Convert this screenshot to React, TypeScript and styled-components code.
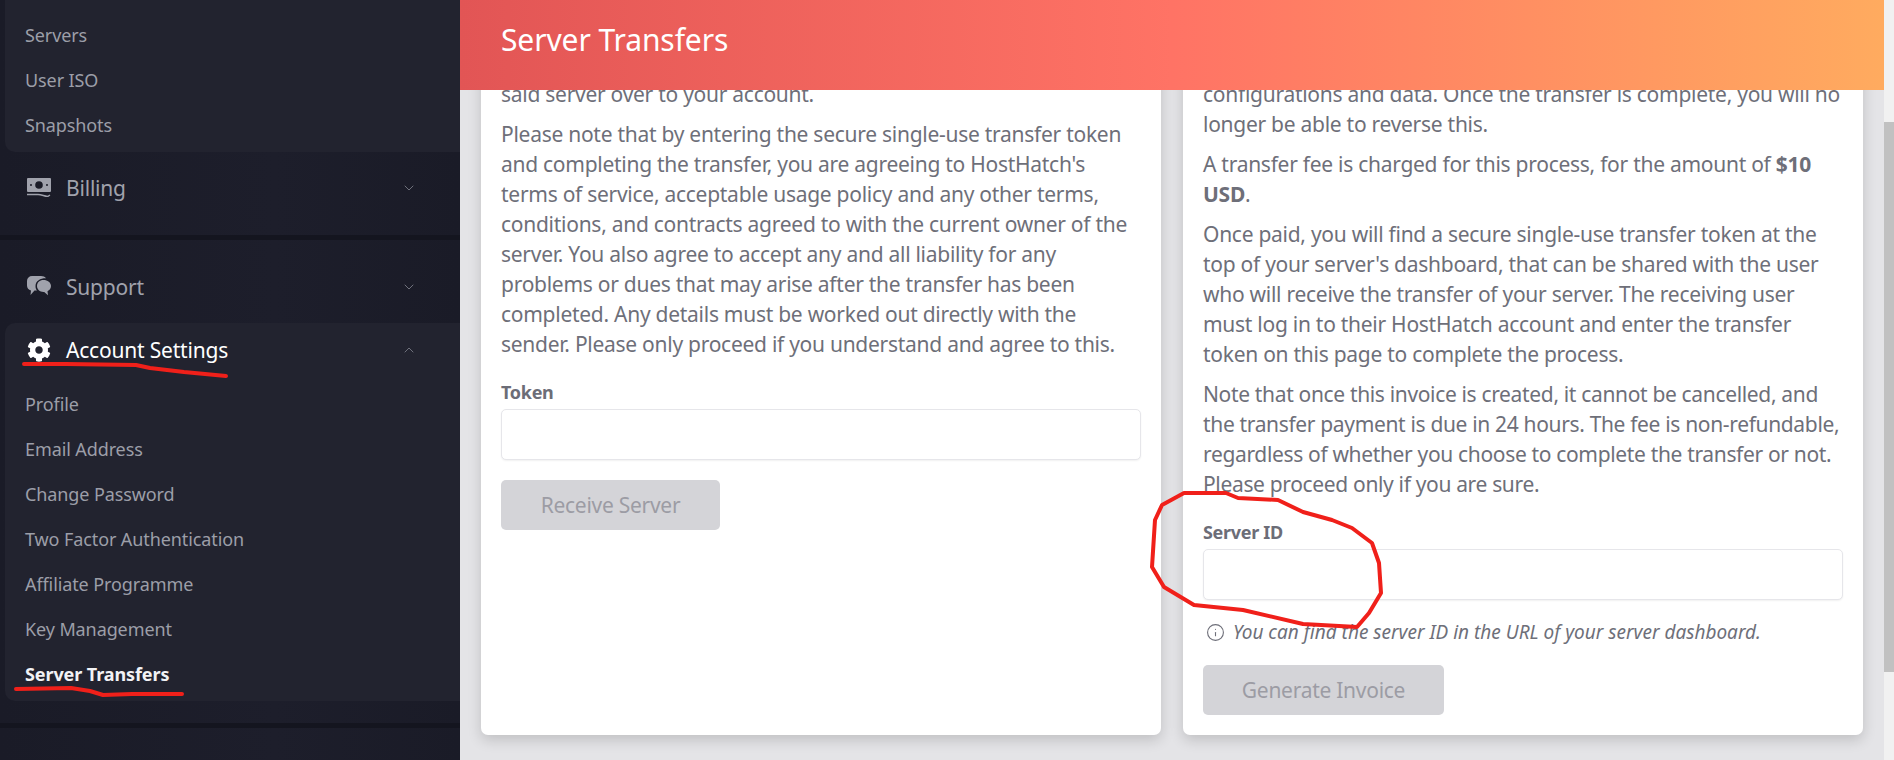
import { createGlobalStyle, styled } from "styled-components";
import { ChevronDown, ChevronUp, Info } from "lucide-react";
import { FaCog } from "react-icons/fa";

const GlobalStyle = createGlobalStyle`
  html, body {
    margin: 0;
    padding: 0;
    height: 760px;
    overflow: hidden;
    background: #e4e4e7;
    font-family: "Noto Sans", "Open Sans", sans-serif;
  }
  * {
    box-sizing: border-box;
  }
`;

const Shell = styled.div`
  position: relative;
  display: flex;
  width: 1894px;
  height: 760px;
  overflow: hidden;
`;

const Sidebar = styled.aside`
  flex: 0 0 460px;
  display: flex;
  flex-direction: column;
  background: linear-gradient(90deg, #1a1b27, #1d1e2b 60%, #1a1b27);
`;

const Panel = styled.div`
  margin-left: 5px;
  padding: 12px 0 5px;
  background: #22232f;
  border-radius: 0 0 0 10px;
`;

const OpenPanel = styled(Panel)`
  padding-top: 0;
  margin-bottom: 11px;
  border-radius: 10px 0 0 10px;
`;

const SubItem = styled.div<{ $active?: boolean }>`
  height: 45px;
  padding-left: 20px;
  display: flex;
  align-items: center;
  font-size: 18px;
  letter-spacing: -0.1px;
  font-weight: ${(props) => (props.$active ? 700 : 400)};
  color: ${(props) => (props.$active ? "#f2f2f5" : "#9c9ea8")};
`;

const MenuRow = styled.div<{ $open?: boolean }>`
  height: 72px;
  display: flex;
  align-items: center;
  padding-left: 27px;
  color: ${(props) => (props.$open ? "#ffffff" : "#a0a2ac")};
  font-size: 21px;
  letter-spacing: -0.2px;
`;

const OpenRow = styled(MenuRow)`
  height: 54px;
  margin-bottom: 4px;
  padding-left: 22px;
`;

const MenuIcon = styled.span`
  width: 24px;
  display: flex;
  justify-content: center;
  font-size: 24px;
  margin-right: 15px;
`;

const MenuLabel = styled.span`
  flex: 1;
`;

const Caret = styled.span`
  width: 59px;
  display: flex;
  color: #6f717c;
`;

const Divider = styled.div`
  height: 5px;
  margin: 11px 0;
  background: #14151f;
`;

const Main = styled.main`
  flex: 1;
  min-width: 0;
  display: flex;
  flex-direction: column;
`;

const Header = styled.header`
  flex: 0 0 90px;
  display: flex;
  align-items: center;
  padding: 0 0 12px 41px;
  color: #ffffff;
  font-size: 30px;
  letter-spacing: -0.1px;
  background: linear-gradient(90deg, #e25555 0%, #ff7365 50%, #ffab5f 100%);
`;

const Content = styled.div`
  flex: 1;
  min-height: 0;
  overflow: hidden;
  display: flex;
  flex-direction: column;
  justify-content: flex-end;
  padding: 0 21px 25px;
`;

const Cards = styled.div`
  display: grid;
  grid-template-columns: 680px 680px;
  column-gap: 22px;
`;

const Card = styled.section`
  padding: 20px;
  background: #ffffff;
  border-radius: 7px;
  box-shadow: 0 5px 14px rgba(0, 0, 0, 0.16);
`;

const Text = styled.p<{ $tight?: boolean }>`
  margin: 0 0 10px;
  font-size: 21px;
  line-height: 30px;
  letter-spacing: ${(props) => (props.$tight ? "-0.34px" : "-0.27px")};
  color: #6e6f79;

  b {
    font-weight: 700;
  }
`;

const Label = styled.label`
  display: block;
  margin-top: 20px;
  height: 27px;
  font-size: 18px;
  line-height: 27px;
  font-weight: 700;
  letter-spacing: -0.3px;
  color: #6c6d77;
`;

const Input = styled.input`
  display: block;
  width: 100%;
  height: 51px;
  margin-top: 3px;
  border: 1px solid #e6e6ea;
  border-radius: 5px;
  background: #ffffff;
  box-shadow: 0 1px 2px rgba(0, 0, 0, 0.06);
`;

const Hint = styled.div`
  display: flex;
  align-items: center;
  gap: 8px;
  height: 30px;
  margin-top: 17px;
  margin-left: 3px;
  font-size: 19px;
  font-style: italic;
  color: #6e6f79;
`;

const SubmitButton = styled.button<{ $width: number }>`
  display: block;
  width: ${(props) => props.$width}px;
  height: 50px;
  margin-top: 20px;
  border: 0;
  border-radius: 5px;
  background: #d4d4d8;
  color: #9c9ca4;
  font-family: inherit;
  font-size: 21px;
  letter-spacing: -0.27px;
`;

const HintButton = styled(SubmitButton)`
  margin-top: 18px;
`;

const Scrollbar = styled.div`
  flex: 0 0 10px;
  background: #f1f1f1;
  padding-top: 122px;
`;

const ScrollThumb = styled.div`
  height: 550px;
  background: #c1c1c1;
`;

const Scribbles = styled.svg`
  position: absolute;
  inset: 0;
  pointer-events: none;
`;

const InkPath = styled.path`
  fill: none;
  stroke: #f0201a;
  stroke-width: 4;
  stroke-linejoin: round;
  stroke-linecap: round;
`;

const serverLinks = ["Servers", "User ISO", "Snapshots"];
const accountLinks = [
  "Profile",
  "Email Address",
  "Change Password",
  "Two Factor Authentication",
  "Affiliate Programme",
  "Key Management",
];

const BillIcon = () => (
  <svg width="24" height="20" viewBox="0 0 24 20">
    <path
      fill="currentColor"
      fillRule="evenodd"
      d="M1 0h22a1 1 0 0 1 1 1v12a1 1 0 0 1-1 1H1a1 1 0 0 1-1-1V1a1 1 0 0 1 1-1zm11 3.2a3.8 3.8 0 1 0 0 7.6 3.8 3.8 0 0 0 0-7.6zM4 6a1 1 0 1 0 0 2 1 1 0 0 0 0-2zm16 0a1 1 0 1 0 0 2 1 1 0 0 0 0-2z"
    />
    <path
      fill="none"
      stroke="currentColor"
      strokeWidth="1.4"
      d="M0 16.5h11c4 0 7 2.2 10 1.8l2-1.3"
    />
  </svg>
);

const ChatIcon = () => (
  <svg width="24" height="22" viewBox="0 0 24 22">
    <path
      fill="currentColor"
      d="M5 0h9c2 0 4 .8 5 2.2C14 2 8.500 4.500 8.500 10c0 2 .6 3.500 1.500 4.500H7.500L3.500 19l.5-4.500C1.500 14 0 12 0 9.500V5a5 5 0 0 1 5-5z"
    />
    <path
      fill="currentColor"
      d="M16.500 4C20.600 4 24 6.600 24 10c0 2.400-1.600 4.300-3.500 5.200l.5 4-3.800-3.300c-4.200.3-7.200-2.400-7.200-5.900C10 6.600 12.500 4 16.500 4z"
    />
  </svg>
);

export default function App() {
  return (
    <Shell>
      <GlobalStyle />
      <Sidebar>
        <Panel>
          {serverLinks.map((link) => (
            <SubItem key={link}>{link}</SubItem>
          ))}
        </Panel>
        <MenuRow>
          <MenuIcon>
            <BillIcon />
          </MenuIcon>
          <MenuLabel>Billing</MenuLabel>
          <Caret>
            <ChevronDown size={16} strokeWidth={1.5} />
          </Caret>
        </MenuRow>
        <Divider />
        <MenuRow>
          <MenuIcon>
            <ChatIcon />
          </MenuIcon>
          <MenuLabel>Support</MenuLabel>
          <Caret>
            <ChevronDown size={16} strokeWidth={1.5} />
          </Caret>
        </MenuRow>
        <OpenPanel>
          <OpenRow $open>
            <MenuIcon>
              <FaCog />
            </MenuIcon>
            <MenuLabel>Account Settings</MenuLabel>
            <Caret>
              <ChevronUp size={16} strokeWidth={1.5} />
            </Caret>
          </OpenRow>
          {accountLinks.map((link) => (
            <SubItem key={link}>{link}</SubItem>
          ))}
          <SubItem $active>Server Transfers</SubItem>
        </OpenPanel>
        <Divider />
      </Sidebar>

      <Main>
        <Header>Server Transfers</Header>
        <Content>
          <Cards>
            <Card>
              <Text>
                If you were given a token for a server, enter it below to
                transfer said server over to your account.
              </Text>
              <Text>
                Please note that by entering the secure single-use transfer
                token and completing the transfer, you are agreeing to
                HostHatch's terms of service, acceptable usage policy and any
                other terms, conditions, and contracts agreed to with the
                current owner of the server. You also agree to accept any and
                all liability for any problems or dues that may arise after the
                transfer has been completed. Any details must be worked out
                directly with the sender. Please only proceed if you understand
                and agree to this.
              </Text>
              <Label>Token</Label>
              <Input />
              <SubmitButton $width={219} disabled>
                Receive Server
              </SubmitButton>
            </Card>
            <Card>
              <Text>
                You can transfer a server to another user, along with all of its
                configurations and data. Once the transfer is complete, you will
                no longer be able to reverse this.
              </Text>
              <Text>
                A transfer fee is charged for this process, for the amount of{" "}
                <b>$10 USD</b>.
              </Text>
              <Text>
                Once paid, you will find a secure single-use transfer token at
                the top of your server's dashboard, that can be shared with the
                user who will receive the transfer of your server. The receiving
                user must log in to their HostHatch account and enter the
                transfer token on this page to complete the process.
              </Text>
              <Text $tight>
                Note that once this invoice is created, it cannot be cancelled,
                and the transfer payment is due in 24 hours. The fee is
                non-refundable, regardless of whether you choose to complete the
                transfer or not. Please proceed only if you are sure.
              </Text>
              <Label>Server ID</Label>
              <Input />
              <Hint>
                <Info size={19} strokeWidth={1.4} />
                You can find the server ID in the URL of your server dashboard.
              </Hint>
              <HintButton $width={241} disabled>
                Generate Invoice
              </HintButton>
            </Card>
          </Cards>
        </Content>
      </Main>

      <Scrollbar>
        <ScrollThumb />
      </Scrollbar>

      <Scribbles width={1894} height={760} viewBox="0 0 1894 760">
        <InkPath d="M24 364 L66 364 L136 365 L150 368 L184 372 L226 376" />
        <InkPath d="M16 689 L71 688 L90 691 L103 695 L132 694 L182 694" />
        <InkPath d="M1226 493 L1184 493 L1162 505 L1155 520 L1152 567 L1164 587 L1194 605 L1243 610 L1303 624 L1357 627 L1369 613 L1381 593 L1379 563 L1372 543 L1352 528 L1332 520 L1303 512 L1278 500 L1238 498 L1226 493" />
      </Scribbles>
    </Shell>
  );
}
